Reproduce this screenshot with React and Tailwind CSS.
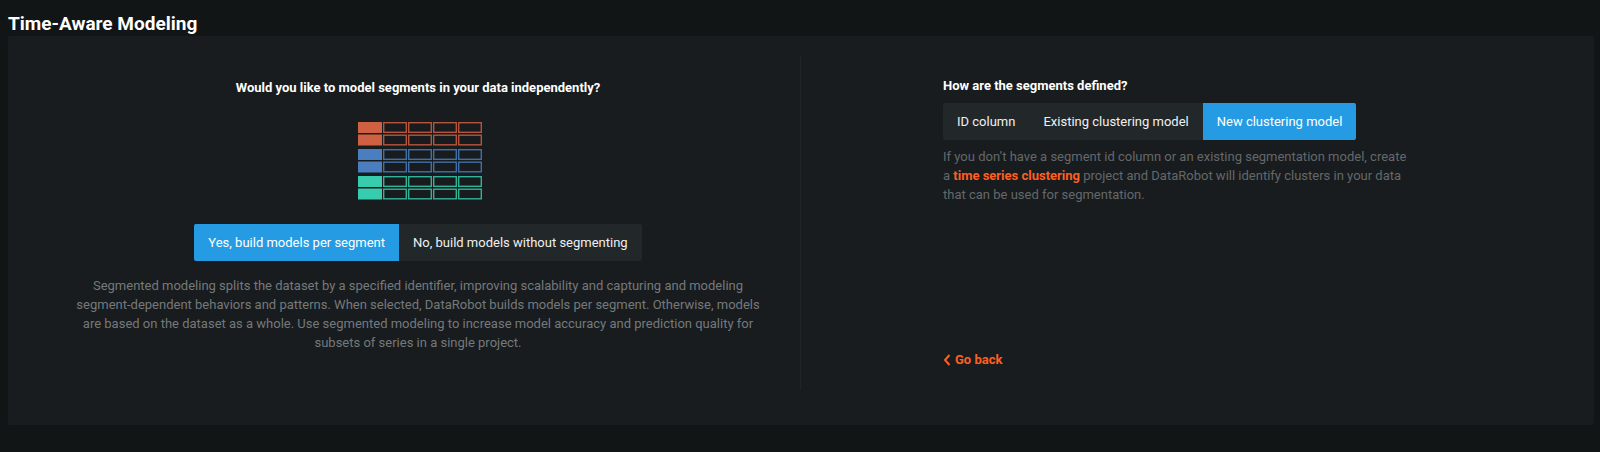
import React, { useState } from 'react';

const segmentingOptions = [
  { value: 'segmented', label: 'Yes, build models per segment' },
  { value: 'single', label: 'No, build models without segmenting' },
];

const definitionOptions = [
  { value: 'id', label: 'ID column' },
  { value: 'existing', label: 'Existing clustering model' },
  { value: 'new', label: 'New clustering model' },
];

const segmentRows = [
  { y: 0, color: '#cf6042' },
  { y: 12.5, color: '#cf6042' },
  { y: 27, color: '#4a7ebf' },
  { y: 39.5, color: '#4a7ebf' },
  { y: 54, color: '#37ccad' },
  { y: 66.5, color: '#37ccad' },
];

const ButtonGroup = ({ label, options, value, onChange }) => (
  <div role="group" aria-label={label} className="flex overflow-hidden rounded-xs bg-[#22272a]">
    {options.map((option) => (
      <button
        key={option.value}
        type="button"
        aria-pressed={option.value === value}
        onClick={() => onChange(option.value)}
        className={`h-[37px] px-3.5 whitespace-nowrap ${
          option.value === value ? 'bg-[#259be3] text-white' : 'text-[#f0f0f0]'
        }`}
      >
        {option.label}
      </button>
    ))}
  </div>
);

const SegmentsIcon = () => (
  <svg width="124" height="78" viewBox="0 0 124 78" fill="none" aria-hidden="true">
    {segmentRows.map((row) => (
      <g key={row.y}>
        <rect x="0" y={row.y} width="24" height="11" fill={row.color} />
        {[25, 50, 75, 100].map((x) => (
          <rect
            key={x}
            x={x + 0.7}
            y={row.y + 0.7}
            width="22.6"
            height="9.6"
            stroke={row.color}
            strokeWidth="1.4"
            strokeOpacity="0.85"
          />
        ))}
      </g>
    ))}
  </svg>
);

const App = () => {
  const [segmenting, setSegmenting] = useState('segmented');
  const [definition, setDefinition] = useState('new');

  return (
    <div className="min-h-screen bg-[#111516] pt-3 pr-1.5 pl-2 font-['Roboto',sans-serif] text-[13px] text-white">
      <h1 className="text-[19px] leading-6 font-bold">Time-Aware Modeling</h1>

      <main className="grid grid-cols-2 rounded-xs bg-[#181c1e] pt-5 pb-[35px]">
        {/* Segmenting choice */}
        <section className="flex min-h-[334px] flex-col items-center border-r border-[#202527] pt-[22px] pr-9 pl-16">
          <h2 className="leading-5 font-bold">Would you like to model segments in your data independently?</h2>
          <div className="mt-6 mb-6 pl-1">
            <SegmentsIcon />
          </div>
          <ButtonGroup
            label="Model segments independently"
            options={segmentingOptions}
            value={segmenting}
            onChange={setSegmenting}
          />
          <p className="mt-[15px] text-center leading-[19px] text-[#75797b]">
            Segmented modeling splits the dataset by a specified identifier, improving scalability and capturing and
            modeling segment-dependent behaviors and patterns. When selected, DataRobot builds models per segment.
            Otherwise, models are based on the dataset as a whole. Use segmented modeling to increase model accuracy
            and prediction quality for subsets of series in a single project.
          </p>
        </section>

        {/* Segment definition */}
        <section className="flex flex-col items-start pt-5 pb-5 pl-[142px]">
          <h2 className="leading-5 font-bold">How are the segments defined?</h2>
          <div className="mt-[7px]">
            <ButtonGroup
              label="Segment definition"
              options={definitionOptions}
              value={definition}
              onChange={setDefinition}
            />
          </div>
          <p className="mt-[7px] max-w-[468px] leading-[19px] text-[#64686a]">
            If you don’t have a segment id column or an existing segmentation model, create a{' '}
            <a href="#clustering" className="font-bold text-[#ff5f1f]">
              time series clustering
            </a>{' '}
            project and DataRobot will identify clusters in your data that can be used for segmentation.
          </p>
          <button type="button" className="mt-auto flex items-center gap-1 leading-5 font-bold text-[#ff5f1f]">
            <svg width="8" height="12" viewBox="0 0 8 12" fill="none" aria-hidden="true">
              <path d="M6.5 1L2 6l4.5 5" stroke="currentColor" strokeWidth="2" />
            </svg>
            Go back
          </button>
        </section>
      </main>
    </div>
  );
};

export default App;
